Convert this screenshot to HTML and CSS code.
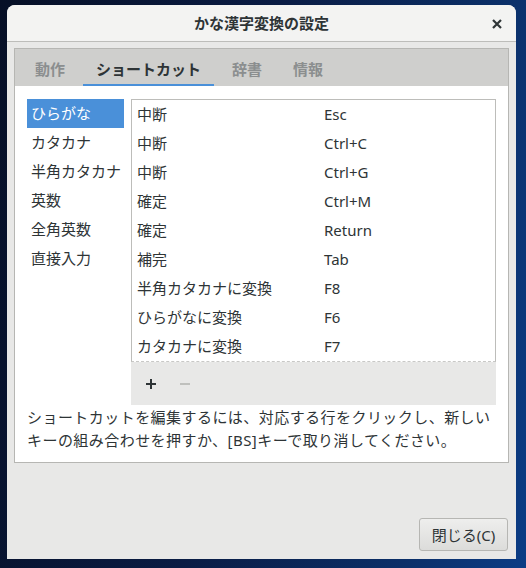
FILE: index.html
```html
<!DOCTYPE html>
<html lang="ja">
<head>
<meta charset="utf-8">
<title>かな漢字変換の設定</title>
<link rel="stylesheet" href="styles.css">
</head>
<body>
<div class="window">
  <div class="titlebar">
    <span></span>
    <span class="title">かな漢字変換の設定</span>
    <span class="close"><svg width="12" height="12" viewBox="0 0 12 12"><path d="M2 2 L10 10 M10 2 L2 10" stroke="#2e3436" stroke-width="2.2" stroke-linecap="butt"/></svg></span>
  </div>
  <div class="body">
    <div class="notebook">
      <div class="tabs">
        <div class="tab">動作</div>
        <div class="tab active">ショートカット</div>
        <div class="tab">辞書</div>
        <div class="tab">情報</div>
      </div>
      <div class="page">
        <div class="panes">
          <div class="list">
            <div class="item selected">ひらがな</div>
            <div class="item">カタカナ</div>
            <div class="item">半角カタカナ</div>
            <div class="item">英数</div>
            <div class="item">全角英数</div>
            <div class="item">直接入力</div>
          </div>
          <div class="right">
            <div class="tree">
              <div class="trow"><span class="c1">中断</span><span class="c2">Esc</span></div>
              <div class="trow"><span class="c1">中断</span><span class="c2">Ctrl+C</span></div>
              <div class="trow"><span class="c1">中断</span><span class="c2">Ctrl+G</span></div>
              <div class="trow"><span class="c1">確定</span><span class="c2">Ctrl+M</span></div>
              <div class="trow"><span class="c1">確定</span><span class="c2">Return</span></div>
              <div class="trow"><span class="c1">補完</span><span class="c2">Tab</span></div>
              <div class="trow"><span class="c1">半角カタカナに変換</span><span class="c2">F8</span></div>
              <div class="trow"><span class="c1">ひらがなに変換</span><span class="c2">F6</span></div>
              <div class="trow"><span class="c1">カタカナに変換</span><span class="c2">F7</span></div>
            </div>
            <div class="toolbar">
              <span class="tbtn">
                <svg width="12" height="12" viewBox="0 0 12 12"><path d="M6 1 V11 M1 6 H11" stroke="#2e3436" stroke-width="2"/></svg>
              </span>
              <span class="tbtn">
                <svg width="12" height="12" viewBox="0 0 12 12"><path d="M1 6 H11" stroke="#b4b6b3" stroke-width="1.6"/></svg>
              </span>
            </div>
          </div>
        </div>
        <p class="desc">ショートカットを編集するには、対応する行をクリックし、新しい<br>キーの組み合わせを押すか、[BS]キーで取り消してください。</p>
      </div>
    </div>
    <div class="footer">
      <button class="btn">閉じる(C)</button>
    </div>
  </div>
</div>
</body>
</html>
```

FILE: styles.css
```css
html, body {
  margin: 0;
  padding: 0;
}
body {
  width: 526px;
  height: 568px;
  overflow: hidden;
  background: linear-gradient(100deg, #060f26 0%, #0a1c44 45%, #0b2f68 80%, #0b3c85 100%);
  font-family: "Noto Sans", "Noto Sans CJK JP", sans-serif;
  font-size: 15px;
  color: #2e3436;
}
.window {
  margin: 5px 0 0 7px;
  width: 509px;
  height: 554px;
  border-radius: 8px 8px 0 0;
  background: #e8e8e7;
  display: flex;
  flex-direction: column;
  overflow: hidden;
}
.titlebar {
  height: 36px;
  flex: none;
  background: #f3f3f2;
  border-bottom: 1px solid #bdbdba;
  display: grid;
  grid-template-columns: 1fr auto 1fr;
  align-items: center;
}
.title {
  font-weight: bold;
  font-size: 15px;
  color: #2e3436;
  line-height: 20px;
}
.close {
  justify-self: end;
  margin-right: 13px;
  display: flex;
  align-items: center;
  margin-top: 1px;
}
.body {
  flex: 1;
  display: flex;
  flex-direction: column;
  padding: 6px 7px 8px 7px;
}
.notebook {
  border: 1px solid #b6b6b3;
  height: 415px;
  box-sizing: border-box;
  display: flex;
  flex-direction: column;
  background: #ffffff;
}
.tabs {
  height: 37px;
  flex: none;
  background: #cfcfcd;
  display: flex;
  gap: 5px;
  padding-left: 7px;
  box-sizing: border-box;
}
.tab {
  padding: 0 13px;
  font-weight: bold;
  font-size: 15px;
  color: #8b8e8f;
  display: flex;
  align-items: center;
  padding-top: 3px;
  box-sizing: border-box;
  border-bottom: 2px solid transparent;
}
.tab.active {
  color: #2e3436;
  border-bottom-color: #4a90d9;
}
.page {
  flex: 1;
  padding: 13px 12px 0 12px;
}
.panes {
  display: flex;
  gap: 7px;
}
.list {
  width: 97px;
  flex: none;
}
.item {
  height: 29px;
  line-height: 29px;
  padding-left: 4px;
  white-space: nowrap;
}
.item.selected {
  background: #4a90d9;
  color: #ffffff;
}
.right {
  flex: 1;
  display: flex;
  flex-direction: column;
}
.tree {
  border: 1px solid #bdbdba;
  border-bottom: 1px dashed #c8c8c6;
  background: #ffffff;
}
.trow {
  height: 29px;
  line-height: 29px;
  display: flex;
  padding-left: 5px;
}
.c1 {
  width: 187px;
  white-space: nowrap;
}
.c2 {
  white-space: nowrap;
}
.toolbar {
  height: 43px;
  background: #e8e8e7;
  display: flex;
  align-items: center;
  padding-left: 14px;
  gap: 22px;
}
.tbtn {
  display: flex;
  width: 12px;
  height: 12px;
}
.desc {
  margin: 0;
  padding-top: 1px;
  line-height: 23px;
  font-size: 15px;
  letter-spacing: 0.45px;
  white-space: nowrap;
}
.footer {
  flex: 1;
  display: flex;
  justify-content: flex-end;
  align-items: flex-end;
  padding-right: 1px;
}
.btn {
  width: 89px;
  height: 33px;
  border: 1px solid #b6b6b3;
  border-radius: 3px;
  background: linear-gradient(#eeeeed, #dcdcda);
  font-family: "Noto Sans", "Noto Sans CJK JP", sans-serif;
  font-size: 15px;
  color: #2e3436;
  padding: 0;
}
```
